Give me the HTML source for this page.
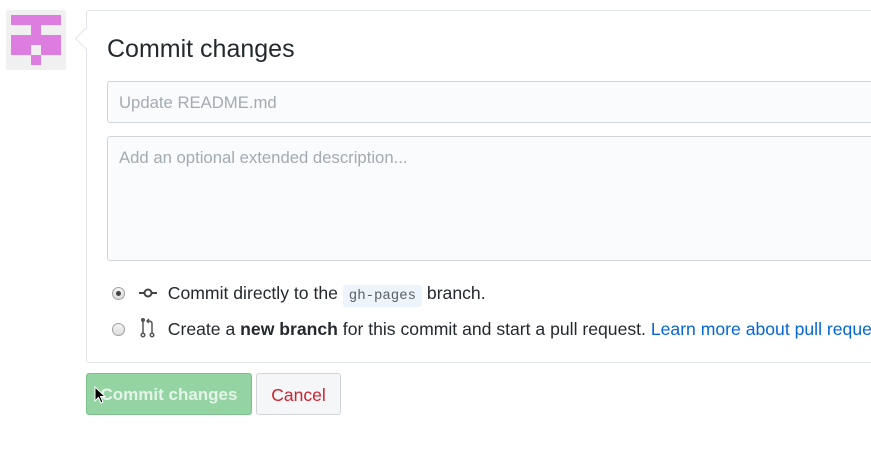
<!DOCTYPE html>
<html><head><style>
body{margin:0;width:871px;height:456px;background:#fff;font-family:"Liberation Sans",sans-serif;position:relative;overflow:hidden;color:#24292e}
.av{position:absolute;left:6px;top:10px;width:60px;height:60px;background:#f0f0f0;border-radius:3px}
.p{position:absolute;background:#dc7ddf}
.card{position:absolute;left:86px;top:10px;width:820px;height:351px;border:1px solid #e1e4e8;border-radius:3px;background:#fff}
.arrow{position:absolute;left:78px;top:31px;width:14px;height:14px;background:#fff;border-left:1px solid #e1e4e8;border-bottom:1px solid #e1e4e8;transform:rotate(45deg)}
h2{position:absolute;left:107px;top:35px;margin:0;font-size:25px;font-weight:normal;color:#24292e}
.in{position:absolute;left:107px;border:1px solid #d1d5da;border-radius:3px;background:#fafbfc;width:800px;color:#a3aab1;font-size:16.7px;box-sizing:border-box;padding:11px 11px}
.row{position:absolute;left:112px;font-size:17.6px;color:#24292e;white-space:nowrap}
.radio{display:inline-block;width:13px;height:13px;border:1px solid #a0a0a0;border-radius:50%;background:linear-gradient(#f4f4f4,#ddd);vertical-align:-1px;position:relative;box-sizing:border-box}
.code{font-family:"Liberation Mono",monospace;font-size:14px;background:#eef4fb;color:#586069;padding:3px 6px;border-radius:3px}
.btn{position:absolute;top:373px;height:42px;border-radius:3px;box-sizing:border-box;font-size:17px;font-weight:bold;line-height:42px;text-align:center}
</style></head><body>
<div class="av">
<div class="p" style="left:5px;top:5px;width:50px;height:10px"></div>
<div class="p" style="left:25px;top:15px;width:10px;height:10px"></div>
<div class="p" style="left:5px;top:25px;width:50px;height:10px"></div>
<div class="p" style="left:5px;top:35px;width:20px;height:10px"></div>
<div class="p" style="left:35px;top:35px;width:20px;height:10px"></div>
<div class="p" style="left:25px;top:45px;width:10px;height:10px"></div>
</div>
<div class="card"></div>
<div class="arrow"></div>
<h2>Commit changes</h2>
<div class="in" style="top:81px;height:42px">Update README.md</div>
<div class="in" style="top:136px;height:125px">Add an optional extended description...</div>
<div class="row" style="top:283px"><span class="radio"><span style="position:absolute;left:3px;top:3px;width:5px;height:5px;border-radius:50%;background:#444"></span></span>
<svg width="18" height="12" viewBox="0 0 18 12" style="margin-left:9px;vertical-align:0"><line x1="0" y1="6" x2="18" y2="6" stroke="#444" stroke-width="2"/><circle cx="9" cy="6" r="3.5" fill="#fff" stroke="#444" stroke-width="2"/></svg>
<span style="margin-left:6px">Commit directly to the <span class="code">gh-pages</span> branch.</span></div>
<div class="row" style="top:318px"><span class="radio"></span>
<svg width="18" height="20" viewBox="0 0 18 20" style="margin-left:9px;vertical-align:-3px" fill="none" stroke="#555" stroke-width="1.5"><line x1="4" y1="2" x2="4" y2="15"/><circle cx="4" cy="17" r="1.8"/><circle cx="13" cy="17" r="1.8"/><path d="M13 15V6Q13 3 10 3H8"/><path d="M10 1L8 3 10 5"/><circle cx="4" cy="2" r="1.3" fill="#555"/></svg>
<span style="margin-left:6px">Create a <b>new branch</b> for this commit and start a pull request. <span style="color:#0366d6">Learn more about pull requests</span></span></div>
<div class="btn" style="left:86px;width:166px;background:#94d3a2;border:1px solid #7cc08c;color:#e4f4e8">Commit changes</div>
<div class="btn" style="left:256px;width:85px;background:#f5f6f8;border:1px solid #d1d5da;color:#cb2431;font-weight:normal;font-size:17.5px">Cancel</div>
<svg width="12" height="18" viewBox="0 0 12 18" style="position:absolute;left:94px;top:386px"><path d="M1 1V15L4.5 11.5 7 17 9 16 6.5 10.5H11Z" fill="#000" stroke="#fff" stroke-width="1"/></svg>
</body></html>
